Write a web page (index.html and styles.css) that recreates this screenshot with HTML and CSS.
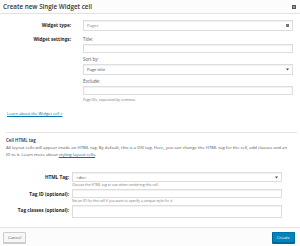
FILE: index.html
```html
<!DOCTYPE html>
<html lang="en">
<head>
    <meta charset="UTF-8">
    <title>Create new Single Widget cell</title>
    <link rel="stylesheet" href="styles.css">
</head>
<body>
    <div class="dialog">
        <div class="dialog-head">
            <h1>Create new Single Widget cell</h1>
            <span class="close-btn"><svg width="4" height="4" viewBox="0 0 4 4"><rect x="0.5" y="0.5" width="3" height="3" fill="#9a9a9a" stroke="#555" stroke-width="1"/></svg></span>
        </div>

        <div class="dialog-body">
            <div class="form-top">
                <label class="row-label row-label-mid">Widget type:</label>
                <div class="select select-big"><span class="muted">Pages</span><svg width="3" height="3" viewBox="0 0 3 3"><rect width="3" height="3" fill="#777"/></svg></div>

                <label class="row-label row-label-top">Widget settings:</label>
                <div class="settings">
                    <div class="field-label">Title:</div>
                    <div class="input"></div>
                    <div class="field-label">Sort by:</div>
                    <div class="select select-big"><span>Page title</span><svg width="3" height="3" viewBox="0 0 3 3"><path d="M0 0.5h3L1.5 2.5z" fill="#444"/></svg></div>
                    <div class="field-label">Exclude:</div>
                    <div class="input"></div>
                    <div class="help">Page IDs, separated by commas.</div>
                </div>
            </div>

            <a class="learn-link" href="#">Learn about the Widget cell »</a>

            <hr class="sep">

            <h2>Cell HTML tag</h2>
            <p class="intro">All layout cells will appear inside an HTML tag. By default, this is a DIV tag. Here, you can change the HTML tag for the cell, add classes and an ID to it. Learn more about <a href="#">styling layout cells</a>.</p>

            <div class="form-bottom">
                <label class="row-label row-label-mid">HTML Tag:</label>
                <div>
                    <div class="select select-tag"><span>&lt;div&gt;</span><svg width="3" height="3" viewBox="0 0 3 3"><path d="M0 0.5h3L1.5 2.5z" fill="#444"/></svg></div>
                    <div class="help">Choose the HTML tag to use when rendering this cell.</div>
                </div>

                <label class="row-label row-label-mid">Tag ID (optional):</label>
                <div>
                    <div class="input"></div>
                    <div class="help">Set an ID for the cell if you want to specify a unique style for it.</div>
                </div>

                <label class="row-label row-label-mid">Tag classes (optional):</label>
                <div class="textarea"></div>
            </div>
        </div>

        <div class="dialog-foot">
            <button class="btn">Cancel</button>
            <button class="btn btn-primary">Create</button>
        </div>
    </div>
</body>
</html>
```

FILE: styles.css
```css
body {
    margin: 0;
    padding: 0;
    font-family: "Open Sans", "Liberation Sans", sans-serif;
    color: #444;
    background-color: #fff;
}

.dialog {
    width: 300px;
    height: 246px;
    display: flex;
    flex-direction: column;
}

.dialog-head {
    height: 13px;
    flex-shrink: 0;
    display: flex;
    align-items: center;
    justify-content: space-between;
    padding: 0 4px 0 3px;
    background-color: #fcfcfc;
    border-bottom: 1px solid #e2e2e2;
}

.dialog-head h1 {
    margin: 0;
    font-size: 6.3px;
    font-weight: 600;
    color: #32373c;
}

.close-btn {
    display: flex;
}

.dialog-body {
    flex: 1;
    padding: 0 3px 0 0;
}

.form-top {
    display: grid;
    grid-template-columns: 71px 210px;
    column-gap: 12px;
    row-gap: 6px;
    margin-top: 6px;
}

.form-bottom {
    display: grid;
    grid-template-columns: 69px 210px;
    column-gap: 3px;
    row-gap: 1px;
    margin-top: 14px;
}

.row-label {
    text-align: right;
    font-size: 4.7px;
    font-weight: 700;
    color: #23282d;
}

.row-label-mid {
    align-self: start;
    line-height: 10px;
}

.row-label-top {
    line-height: 5px;
}

.field-label {
    font-size: 4.4px;
    line-height: 5px;
    color: #555;
    margin: 4px 0 2px;
}

.settings .field-label:first-child {
    margin-top: 0;
}

.input,
.select,
.textarea {
    box-sizing: border-box;
    border: 1px solid #ddd;
    box-shadow: inset 0 1px 1px rgba(0, 0, 0, 0.06);
    background-color: #fff;
}

.input {
    height: 9px;
}

.textarea {
    height: 13px;
}

.select {
    display: flex;
    align-items: center;
    justify-content: space-between;
    padding: 0 3px 0 3px;
    font-size: 4.2px;
    color: #444;
}

.select-big {
    height: 11px;
}

.select-tag {
    height: 10px;
}

.muted {
    color: #888;
}

.help {
    font-size: 3.5px;
    line-height: 5px;
    color: #777;
    margin-bottom: 1px;
}

.settings .help {
    margin-top: 2px;
}

.learn-link {
    display: block;
    margin: 8px 0 0 7px;
    font-size: 4.1px;
    line-height: 5px;
    color: #0073aa;
}

.sep {
    margin: 16px 0 0 6px;
    border: 0;
    border-top: 1px solid #e5e5e5;
}

h2 {
    margin: 4px 0 0 6px;
    font-size: 4.5px;
    font-weight: 600;
    color: #23282d;
}

.intro {
    margin: 1px 5px 0 6px;
    font-size: 4.3px;
    line-height: 7px;
    color: #555;
}

.intro a {
    color: #0073aa;
}

.dialog-foot {
    height: 18px;
    flex-shrink: 0;
    display: flex;
    align-items: center;
    justify-content: space-between;
    padding: 0 5px 0 3px;
    background-color: #fcfcfc;
    border-top: 1px solid #e5e5e5;
}

.btn {
    height: 11px;
    padding: 0 4px;
    font-family: inherit;
    font-size: 4.3px;
    color: #555;
    background-color: #f7f7f7;
    border: 1px solid #ccc;
    border-radius: 1px;
    box-shadow: 0 1px 0 #ccc;
}

.btn-primary {
    color: #fff;
    background-color: #0085ba;
    border-color: #0073aa #006799 #006799;
    box-shadow: 0 1px 0 #006799;
}
```
